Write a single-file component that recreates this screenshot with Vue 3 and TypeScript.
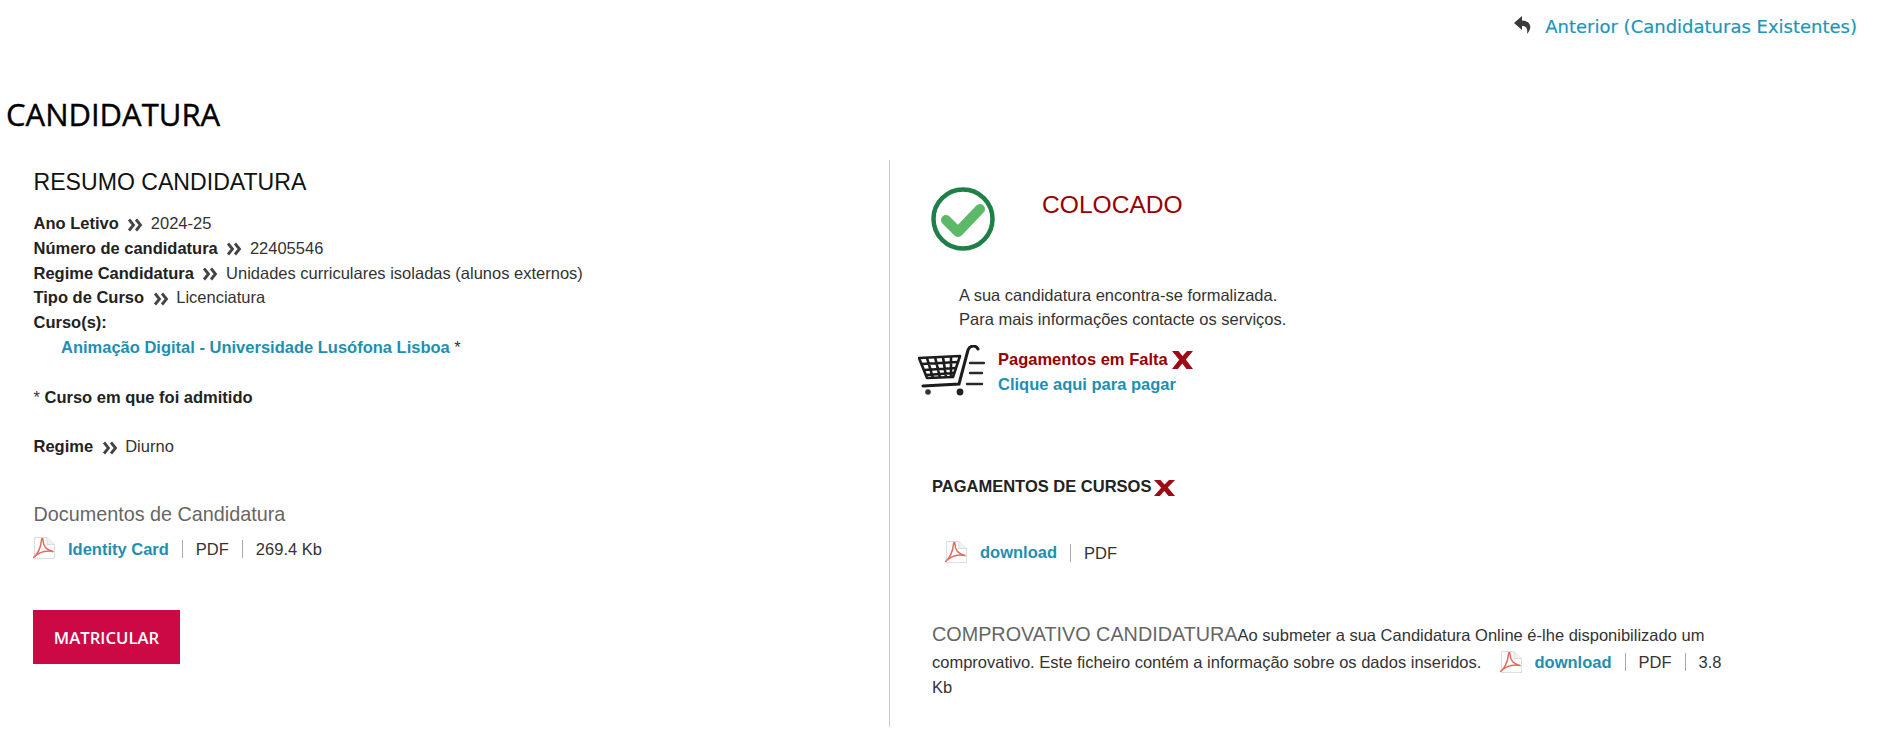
<script setup lang="ts">
interface Row { label: string; value: string }
const rows: Row[] = [
  { label: 'Ano Letivo', value: '2024-25' },
  { label: 'Número de candidatura', value: '22405546' },
  { label: 'Regime Candidatura', value: 'Unidades curriculares isoladas (alunos externos)' },
  { label: 'Tipo de Curso', value: 'Licenciatura' },
]
</script>

<template>
  <div class="page">
    <svg class="defs" width="0" height="0" aria-hidden="true">
      <defs>
        <symbol id="chev" viewBox="0 0 16 14">
          <path d="M2 1.5 6.5 7 2 12.5M9 1.5 13.5 7 9 12.5" fill="none" stroke="#444" stroke-width="2.8" />
        </symbol>
        <symbol id="pdf" viewBox="0 0 22 22">
          <path d="M1.5.5H14L21.5 7.5V21.5H1.5Z" fill="#fff" stroke="#ddd" />
          <path d="M14 .5V7.5H21.5" fill="#f1f1f1" stroke="#ddd" />
          <path d="M.5 20.5C4 18 8 11 8.5 3 8.5 1 10 1 10 3 10 9 13 13 20 14.5 14 13.5 6 15 .5 20.5Z" fill="none" stroke="#e56a5f" stroke-width="1.5" stroke-linejoin="round" />
        </symbol>
        <symbol id="cross" viewBox="0 0 21 18" preserveAspectRatio="none">
          <path d="M0 0H6.5L10.5 5 15 0H21L13.8 8.4 21 18H14.5L10.3 12.4 5.8 18H0L7.2 8.8Z" fill="#9b0c16" />
        </symbol>
      </defs>
    </svg>

    <div class="topbar">
      <svg class="reply" viewBox="0 0 18 18" aria-hidden="true">
        <path d="M8 0 0 7l8 7v-4c4 0 6 2 5 8 5-5 5-13-5-13.5Z" fill="#3a3a3a" />
      </svg>
      <a class="back">Anterior (Candidaturas Existentes)</a>
    </div>

    <h1 class="title">CANDIDATURA</h1>

    <div class="columns">
      <section class="left">
        <h2 class="summary">RESUMO CANDIDATURA</h2>
        <div v-for="r in rows" :key="r.label" class="row">
          <b>{{ r.label }}</b>
          <svg class="chev"><use href="#chev" /></svg>
          <span>{{ r.value }}</span>
        </div>
        <div class="row"><b>Curso(s):</b></div>
        <div class="row course"><a class="link">Animação Digital - Universidade Lusófona Lisboa</a> *</div>
        <div class="row blank">* <b>Curso em que foi admitido</b></div>
        <div class="row blank">
          <b>Regime</b>
          <svg class="chev"><use href="#chev" /></svg>
          <span>Diurno</span>
        </div>
        <h3 class="docs">Documentos de Candidatura</h3>
        <div class="file">
          <svg class="pdf"><use href="#pdf" /></svg>
          <a class="link">Identity Card</a>
          <span class="sep">PDF</span>
          <span class="sep">269.4 Kb</span>
        </div>
        <button class="enrol" type="button">MATRICULAR</button>
      </section>

      <section class="right">
        <div class="status">
          <svg class="check" viewBox="0 0 64 64" aria-hidden="true">
            <circle cx="32" cy="32" r="29.5" fill="#fff" stroke="#1f8047" stroke-width="4.5" />
            <path d="M15 33 27 45 49 22" fill="none" stroke="#5cb968" stroke-width="10" stroke-linecap="round" stroke-linejoin="round" />
          </svg>
          <span class="placed">COLOCADO</span>
        </div>
        <p class="note">A sua candidatura encontra-se formalizada.<br />Para mais informações contacte os serviços.</p>

        <div class="payment">
          <svg class="cart" viewBox="0 0 67 52" aria-hidden="true">
            <path d="M1 13 42 11 35 32 9 33Z" fill="#fff" stroke="#1c1c1c" stroke-width="2.6" stroke-linejoin="round" />
            <path d="M9 13 15 33M17 12 22 33M25 12 28 32M33 12 33 32M4 19 40 17M6 25 38 23M8 30 36 28" stroke="#1c1c1c" stroke-width="2.6" fill="none" />
            <path d="M60 4C58 0 52 0 50 5L41 39 5 41" fill="none" stroke="#1c1c1c" stroke-width="3" stroke-linecap="round" />
            <path d="M52 18H66M52 28H64M49 39H64" stroke="#2a2a2a" stroke-width="2.4" stroke-linecap="round" />
            <circle cx="10" cy="47" r="2.8" fill="#333" />
            <circle cx="42" cy="47" r="3.4" fill="#222" />
          </svg>
          <div class="payment-text">
            <div class="missing"><b>Pagamentos em Falta</b><svg class="cross"><use href="#cross" /></svg></div>
            <a class="link pay">Clique aqui para pagar</a>
          </div>
        </div>

        <div class="fees"><b>PAGAMENTOS DE CURSOS</b><svg class="cross small"><use href="#cross" /></svg></div>
        <div class="file fee-file">
          <svg class="pdf"><use href="#pdf" /></svg>
          <a class="link">download</a>
          <span class="sep">PDF</span>
        </div>

        <p class="proof">
          <span class="proof-title">COMPROVATIVO CANDIDATURA</span>Ao submeter a sua Candidatura Online é-lhe disponibilizado um comprovativo. Este ficheiro contém a informação sobre os dados inseridos.
          <svg class="pdf inline"><use href="#pdf" /></svg>
          <a class="link">download</a>
          <span class="sep">PDF</span>
          <span class="sep">3.8</span> Kb
        </p>
      </section>
    </div>
  </div>
</template>

<style>
html, body { margin: 0; background: #fff; }
</style>

<style scoped>
.page { width: 1890px; height: 754px; overflow: hidden; background: #fff; font: 16.5px/24.8px "Liberation Sans", Arial, sans-serif; color: #333; }
.defs { position: absolute; }
.topbar { height: 54px; box-sizing: border-box; padding: 15px 33px 0 0; display: flex; justify-content: flex-end; align-items: flex-start; }
.reply { width: 18px; height: 18px; margin: 1px 13px 0 0; }
.back { font: 18px/24px "DejaVu Sans", sans-serif; color: #2096b8; -webkit-text-stroke: 0.2px #2096b8; }
.title { margin: 40px 0 26px 6px; font: 500 31px/40px "Open Sans", sans-serif; color: #000; -webkit-text-stroke: 0.4px #000; }
.columns { display: grid; grid-template-columns: 889px 1fr; height: 567px; }
.left { padding: 6.5px 0 0 33.5px; }
.summary { margin: 0 0 14.5px; font: 400 23.1px/30px "Liberation Sans", sans-serif; color: #111; }
.row { display: block; white-space: nowrap; }
.row b { color: #222; }
.chev { width: 16px; height: 14px; margin: 0 7.6px 0 8.5px; vertical-align: -2.5px; }
.course { padding-left: 27.5px; }
.link { color: #1f8fb1; font-weight: 700; }
.blank { margin-top: 24.8px; }
.docs { margin: 39.6px 0 8.1px; font: 400 19.8px/30px "Liberation Sans", sans-serif; color: #666; }
.file { display: flex; align-items: center; height: 24.8px; }
.pdf { width: 22px; height: 22px; margin-right: 13px; margin-top: -2px; flex: none; }
.left .pdf { margin-left: -0.5px; }
.sep { line-height: 18px; margin-left: 13px; padding-left: 13px; border-left: 1px solid #aaa; }
.file .sep { display: inline-block; }
.enrol { display: block; width: 147px; height: 54px; margin: 48.6px 0 0 -0.5px; border: 0; padding: 0; background: #cc0845; color: #fff; font: 600 16.7px "Open Sans", sans-serif; }
.right { border-left: 1px solid #ccc; padding: 27px 0 0 42px; }
.status { display: flex; align-items: flex-start; }
.check { width: 64px; height: 64px; margin-left: -1px; flex: none; }
.placed { margin: 3px 0 0 47px; font-size: 24.6px; line-height: 30px; color: #990000; }
.note { margin: 31.6px 0 0 27px; }
.payment { display: flex; margin: 13px 0 0 -14px; align-items: flex-start; }
.cart { width: 67px; height: 52px; flex: none; }
.payment-text { margin: 2px 0 0 13px; }
.missing { display: flex; align-items: center; color: #990000; }
.missing b { color: #990000; }
.cross { width: 21px; height: 18px; margin-left: 4px; }
.cross.small { height: 16px; margin-top: 2px; margin-left: 3px; }
.pay { display: block; }
.fees { display: flex; align-items: center; margin-top: 77.2px; height: 24.8px; color: #222; }
.fee-file { margin: 41px 0 0 13px; }
.proof { width: 800px; margin: 53px 0 0; }
.proof-title { font-size: 19.8px; line-height: 32px; color: #666; }
.pdf.inline { margin: 0 12.6px 0 14px; vertical-align: -4.7px; }
.proof .sep { margin-left: 13px; padding-left: 13px; }
</style>
